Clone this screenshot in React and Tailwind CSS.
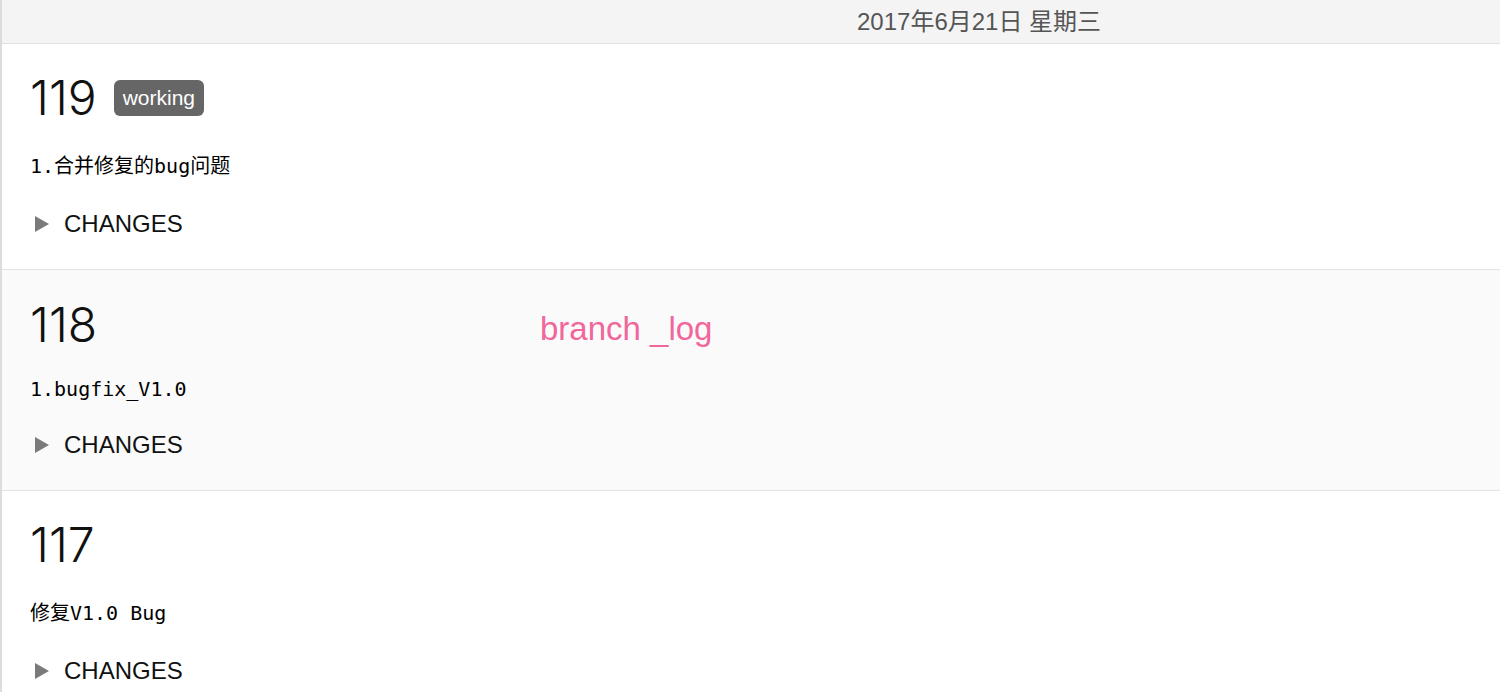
import React from 'react';

const SANS = { fontFamily: '"Liberation Sans", "Noto Sans CJK SC", sans-serif' };

// build rows, newest first
const BUILDS = [
  {
    id: '119',
    tag: 'working',
    desc: '1.合并修复的bug问题',
    bg: 'bg-white',
    pad: 'pt-[26px] pb-[31px]',
    descGap: 'mt-[28px]',
    changesGap: 'mt-[32px]',
  },
  {
    id: '118',
    desc: '1.bugfix_V1.0',
    bg: 'bg-[#fafafa]',
    pad: 'pt-[27px] pb-[31px]',
    descGap: 'mt-[24px]',
    changesGap: 'mt-[30px]',
    note: 'branch _log',
  },
  {
    id: '117',
    desc: '修复V1.0 Bug',
    bg: 'bg-white',
    pad: 'pt-[26px] pb-[31px]',
    descGap: 'mt-[28px]',
    changesGap: 'mt-[32px]',
  },
];

const Caret = () => (
  <svg width="14" height="16" viewBox="0 0 14 16" className="shrink-0">
    <polygon points="0,0 14,8 0,16" fill="#7a7a7a" />
  </svg>
);

const BuildRow = ({ build }) => (
  <div className={`relative border-b border-[#e3e3e3] pl-[28px] ${build.bg} ${build.pad}`}>
    {/* build number + status badge */}
    <div className="flex h-[56px] items-center gap-[17px]">
      <span
        className="text-[48px] font-light leading-none text-[#111]"
        style={{ fontFamily: 'Inter, "Liberation Sans", sans-serif' }}
      >
        {build.id}
      </span>
      {build.tag && (
        <span
          className="flex h-[36px] items-center rounded-[6px] bg-[#666666] px-[9px] text-[21px] text-white"
          style={SANS}
        >
          {build.tag}
        </span>
      )}
    </div>

    {/* commit message */}
    <div
      className={`${build.descGap} h-[24px] text-[20px] leading-[24px] text-black`}
      style={{ fontFamily: '"DejaVu Sans Mono", "Noto Sans CJK SC", monospace' }}
    >
      {build.desc}
    </div>

    {/* collapsed changes */}
    <div className={`${build.changesGap} flex h-[28px] items-center gap-[15px] pl-[5px]`}>
      <Caret />
      <span className="text-[24px] leading-[28px] text-[#111]" style={SANS}>
        CHANGES
      </span>
    </div>

    {build.note && (
      <span
        className="absolute left-[538px] top-[42px] text-[33px] leading-none text-[#f0679b]"
        style={SANS}
      >
        {build.note}
      </span>
    )}
  </div>
);

export default function App() {
  return (
    <div className="h-[692px] w-[1500px] overflow-hidden border-l-2 border-[#dcdcdc] bg-white">
      {/* date header */}
      <div className="flex h-[44px] items-center border-b border-[#e2e2e2] bg-[#f4f4f4] pl-[855px]">
        <span className="text-[24px] leading-none text-[#555]" style={SANS}>
          2017年6月21日 星期三
        </span>
      </div>

      {BUILDS.map((b) => (
        <BuildRow key={b.id} build={b} />
      ))}
    </div>
  );
}
